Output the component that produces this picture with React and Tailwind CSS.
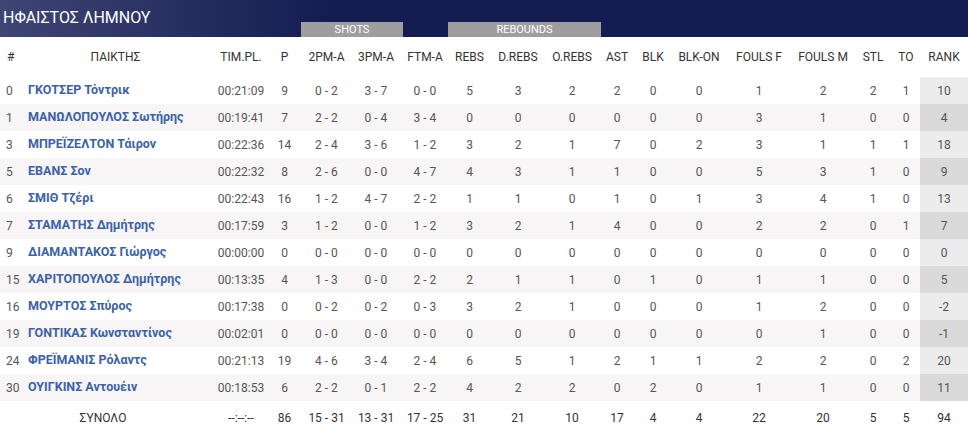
import React from "react";

const players = [
  ["0", "ΓΚΟΤΣΕΡ Τόντρικ", "00:21:09", 9, "0 - 2", "3 - 7", "0 - 0", 5, 3, 2, 2, 0, 0, 1, 2, 2, 1, 10],
  ["1", "ΜΑΝΩΛΟΠΟΥΛΟΣ Σωτήρης", "00:19:41", 7, "2 - 2", "0 - 4", "3 - 4", 0, 0, 0, 0, 0, 0, 3, 1, 0, 0, 4],
  ["3", "ΜΠΡΕΪΖΕΛΤΟΝ Τάιρον", "00:22:36", 14, "2 - 4", "3 - 6", "1 - 2", 3, 2, 1, 7, 0, 2, 3, 1, 1, 1, 18],
  ["5", "ΕΒΑΝΣ Σον", "00:22:32", 8, "2 - 6", "0 - 0", "4 - 7", 4, 3, 1, 1, 0, 0, 5, 3, 1, 0, 9],
  ["6", "ΣΜΙΘ Τζέρι", "00:22:43", 16, "1 - 2", "4 - 7", "2 - 2", 1, 1, 0, 1, 0, 1, 3, 4, 1, 0, 13],
  ["7", "ΣΤΑΜΑΤΗΣ Δημήτρης", "00:17:59", 3, "1 - 2", "0 - 0", "1 - 2", 3, 2, 1, 4, 0, 0, 2, 2, 0, 1, 7],
  ["9", "ΔΙΑΜΑΝΤΑΚΟΣ Γιώργος", "00:00:00", 0, "0 - 0", "0 - 0", "0 - 0", 0, 0, 0, 0, 0, 0, 0, 0, 0, 0, 0],
  ["15", "ΧΑΡΙΤΟΠΟΥΛΟΣ Δημήτρης", "00:13:35", 4, "1 - 3", "0 - 0", "2 - 2", 2, 1, 1, 0, 1, 0, 1, 1, 0, 0, 5],
  ["16", "ΜΟΥΡΤΟΣ Σπύρος", "00:17:38", 0, "0 - 2", "0 - 2", "0 - 3", 3, 2, 1, 0, 0, 0, 1, 2, 0, 0, -2],
  ["19", "ΓΟΝΤΙΚΑΣ Κωνσταντίνος", "00:02:01", 0, "0 - 0", "0 - 0", "0 - 0", 0, 0, 0, 0, 0, 0, 0, 1, 0, 0, -1],
  ["24", "ΦΡΕΪΜΑΝΙΣ Ρόλαντς", "00:21:13", 19, "4 - 6", "3 - 4", "2 - 4", 6, 5, 1, 2, 1, 1, 2, 2, 0, 2, 20],
  ["30", "ΟΥΙΓΚΙΝΣ Αντουέιν", "00:18:53", 6, "2 - 2", "0 - 1", "2 - 2", 4, 2, 2, 0, 2, 0, 1, 1, 0, 0, 11],
];

const heads = ["TIM.PL.", "P", "2PM-A", "3PM-A", "FTM-A", "REBS", "D.REBS", "O.REBS", "AST", "BLK", "BLK-ON", "FOULS F", "FOULS M", "STL", "TO", "RANK"];
const widths = [28, 189, 48, 39, 45, 54, 44, 45, 52, 56, 34, 38, 54, 66, 62, 38, 28, 48];
const totals = ["--:--:--", 86, "15 - 31", "13 - 31", "17 - 25", 31, 21, 10, 17, 4, 4, 22, 20, 5, 5, 94];

export default function App() {
  return (
    <div className="w-[968px] h-[435px] bg-white overflow-hidden font-['Roboto',sans-serif]">
      {/* Team bar */}
      <div className="flex h-[37px] bg-[linear-gradient(90deg,#3f4674_0%,#141c52_34%,#141c51_100%)]">
        <div className="w-[301px] pl-[3px] pb-[1px] flex items-center text-white text-[16px] leading-none">ΗΦΑΙΣΤΟΣ ΛΗΜΝΟΥ</div>
        <div className="self-end w-[102px] h-[15px] bg-[#9e9e9e] text-white text-[11px] leading-[15px] text-center">SHOTS</div>
        <div className="w-[45px]" />
        <div className="self-end w-[153px] h-[15px] bg-[#9e9e9e] text-white text-[11px] leading-[15px] text-center">REBOUNDS</div>
      </div>

      <table className="table-fixed border-collapse w-[968px] text-[12px] text-[#555]">
        <colgroup>
          {widths.map((w, i) => (
            <col key={i} style={{ width: w }} />
          ))}
        </colgroup>
        <thead>
          <tr className="h-[40px] text-[#333]">
            <th className="font-normal text-left pl-[7px]">#</th>
            <th className="font-normal text-center pr-[14px]">ΠΑΙΚΤΗΣ</th>
            {heads.map((h) => (
              <th key={h} className="font-normal text-center whitespace-nowrap">{h}</th>
            ))}
          </tr>
        </thead>
        <tbody>
          {players.map((p, i) => (
            <tr key={p[0]} className={`h-[27px] ${i % 2 ? "bg-[#f7f5f6]" : "bg-white"}`}>
              <td className="text-left pl-[6px]">{p[0]}</td>
              <td className="text-left font-bold text-[#3b62a8] text-[12.5px] whitespace-nowrap">{p[1]}</td>
              {p.slice(2).map((v, j) => (
                <td
                  key={j}
                  className={`text-center whitespace-nowrap ${j === 15 ? (i % 2 ? "bg-[#dadada]" : "bg-[#ececec]") : ""}`}
                >
                  {v}
                </td>
              ))}
            </tr>
          ))}
          <tr className="h-[34px] text-[#333]">
            <td colSpan={2} className="text-center pr-[11px]">ΣΥΝΟΛΟ</td>
            {totals.map((v, j) => (
              <td key={j} className="text-center whitespace-nowrap">{v}</td>
            ))}
          </tr>
        </tbody>
      </table>
    </div>
  );
}
